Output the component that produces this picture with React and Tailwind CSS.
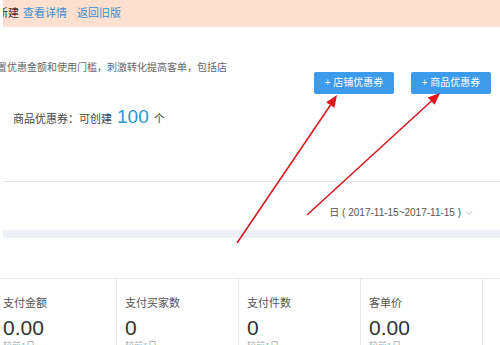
import React from 'react'

const font = { fontFamily: '"Liberation Sans", "Noto Sans CJK SC", sans-serif' }

const stats = [
  { label: '支付金额', value: '0.00' },
  { label: '支付买家数', value: '0' },
  { label: '支付件数', value: '0' },
  { label: '客单价', value: '0.00' },
  { label: '', value: '' },
]

export default function App() {
  return (
    <div className="relative w-[500px] h-[345px] overflow-hidden bg-white pl-[3px]" style={font}>
      {/* Notice banner */}
      <div className="h-[27px] bg-[#fde0cf] flex items-center text-[11px] overflow-hidden">
        <span className="-ml-[6px] text-[#333]">新建</span>
        <a className="ml-[4px] text-[#3b8fd6]">查看详情</a>
        <a className="ml-[10px] text-[#3b8fd6]">返回旧版</a>
      </div>

      {/* Coupon section */}
      <div className="h-[154px] flex">
        <div className="flex-1 min-w-0 pt-[35px]">
          <p className="text-[10px] leading-[12px] text-[#666] -ml-[6px] whitespace-nowrap">
            置优惠金额和使用门槛，刺激转化提高客单，包括店
          </p>
          <div className="mt-[33px] ml-[10px] flex items-baseline h-[20px] text-[11px] text-[#444]">
            <span>商品优惠券：可创建</span>
            <span className="mx-[5px] text-[19px] leading-[20px] text-[#2a97d2]">100</span>
            <span>个</span>
          </div>
        </div>
        <div className="flex gap-[17px] pt-[45px] pr-[9px]">
          <button className="w-[80px] h-[22px] rounded-[2px] bg-[#3c9bea] text-white text-[10px] leading-none">
            + 店铺优惠券
          </button>
          <button className="w-[80px] h-[22px] rounded-[2px] bg-[#3c9bea] text-white text-[10px] leading-none">
            + 商品优惠券
          </button>
        </div>
      </div>

      {/* Date range */}
      <div className="h-[49px] border-t border-[#e6e6e6] flex justify-end items-start pt-[24px] pr-[27px]">
        <span className="text-[10px] leading-[13px] text-[#555] whitespace-pre">日 ( 2017-11-15~2017-11-15 )</span>
        <svg className="ml-[4px] mt-[3px]" width="8" height="8" viewBox="0 0 8 8">
          <path d="M1 2.5 L4 5.5 L7 2.5" fill="none" stroke="#bbb" strokeWidth="1" />
        </svg>
      </div>
      <div className="h-[8px] bg-[#edf0f4]" />
      <div className="h-[40px]" />

      {/* Stat cards */}
      <div className="border-t border-[#e8e8e8] flex -ml-[8px]">
        {stats.map((s, i) => (
          <div key={i} className="w-[122px] shrink-0 h-[80px] border-r border-[#e8e8e8] pl-[8px] pt-[17px]">
            <div className="text-[11px] leading-[14px] text-[#555]">{s.label}</div>
            <div className="mt-[6px] text-[21px] leading-[24px] text-[#333]">{s.value}</div>
            {s.label && <div className="mt-[1px] text-[9px] leading-[10px] text-[#aaa]">较前1日</div>}
          </div>
        ))}
      </div>

      {/* Annotation arrows */}
      <svg className="absolute inset-0 pointer-events-none" width="500" height="345" viewBox="0 0 500 345">
        <line x1="237" y1="243" x2="330.5" y2="105" stroke="#d4141a" strokeWidth="1.5" />
        <polygon points="337,95 334.4,107.8 326.2,102.2" fill="#e0141a" />
        <line x1="307" y1="215" x2="431.5" y2="101" stroke="#d4141a" strokeWidth="1.5" />
        <polygon points="440,93 434.6,104.8 427.8,97.4" fill="#e0141a" />
      </svg>
    </div>
  )
}
